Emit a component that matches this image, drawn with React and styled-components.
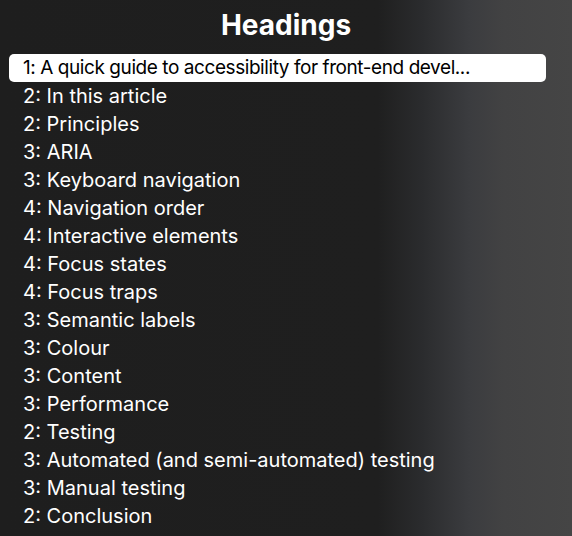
import React from 'react'
import styled, { createGlobalStyle } from 'styled-components'

const headings = [
  '1: A quick guide to accessibility for front-end devel...',
  '2: In this article',
  '2: Principles',
  '3: ARIA',
  '3: Keyboard navigation',
  '4: Navigation order',
  '4: Interactive elements',
  '4: Focus states',
  '4: Focus traps',
  '3: Semantic labels',
  '3: Colour',
  '3: Content',
  '3: Performance',
  '2: Testing',
  '3: Automated (and semi-automated) testing',
  '3: Manual testing',
  '2: Conclusion',
]

export default function App() {
  return (
    <>
      <GlobalStyle />
      <Panel>
        <Title>Headings</Title>
        <List>
          {headings.map((text, i) => (
            <Item key={i} $selected={i === 0}>
              {text}
            </Item>
          ))}
        </List>
      </Panel>
    </>
  )
}

const GlobalStyle = createGlobalStyle`
  html, body {
    margin: 0;
    padding: 0;
    background: #1e1e1e;
  }
  body {
    font-family: Inter, "Liberation Sans", sans-serif;
  }
`

const Panel = styled.div`
  width: 572px;
  height: 536px;
  overflow: hidden;
  box-sizing: border-box;
  padding-top: 7px;
  background: linear-gradient(
    90deg,
    #1e1e1e 0%,
    #1f1f1f 66%,
    #2b2c2e 74%,
    #3b3c3f 82%,
    #424243 88%,
    #454545 100%
  );
`

const Title = styled.h1`
  margin: 0;
  height: 36px;
  text-align: center;
  font-size: 28px;
  font-weight: 700;
  color: #ffffff;
  line-height: 36px;
`

const List = styled.ul`
  list-style: none;
  margin: 0;
  padding: 11px 26px 0 9px;
  display: flex;
  flex-direction: column;
`

const Item = styled.li`
  height: 28px;
  line-height: 28px;
  padding-left: 14px;
  border-radius: 5px;
  white-space: nowrap;
  font-size: ${(p) => (p.$selected ? '19px' : '20px')};
  letter-spacing: ${(p) => (p.$selected ? '-0.43px' : '0')};
  color: ${(p) => (p.$selected ? '#000000' : '#ffffff')};
  background: ${(p) => (p.$selected ? '#ffffff' : 'transparent')};
`
